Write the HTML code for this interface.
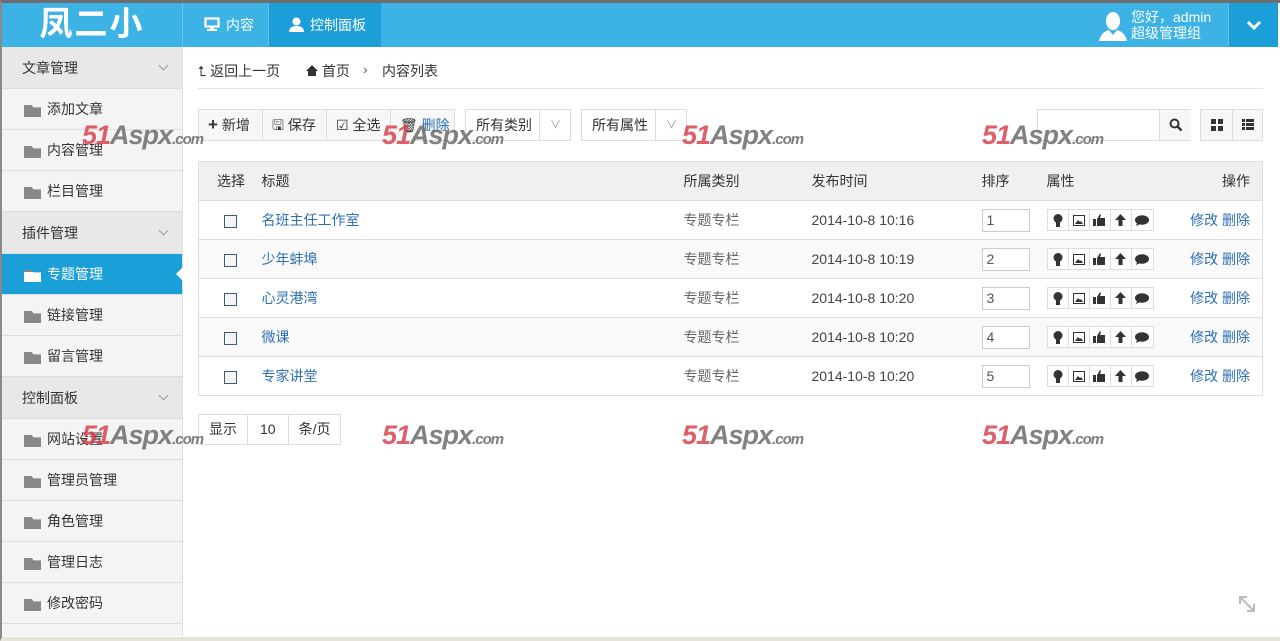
<!DOCTYPE html>
<html><head><meta charset="utf-8">
<style>
*{box-sizing:border-box;margin:0;padding:0}
body{width:1280px;height:641px;overflow:hidden;background:#fff;font-family:"Liberation Sans","Noto Sans CJK SC",sans-serif;font-size:14px;color:#333;position:relative}
.frame{position:absolute;left:0;top:0;width:1280px;height:641px;border-top:3px solid #6d6d6d;border-left:2px solid #8a8a8a;border-bottom:4px solid #e6e4d8}
.hdr{position:absolute;left:2px;top:3px;width:1276px;height:44px;background:#3db3e5}
.logo{position:absolute;left:0;top:0;width:181px;height:44px;color:#fff;font-size:33px;font-weight:bold;text-align:center;line-height:42px;border-right:1px solid #6cc6ec;letter-spacing:2px}
.nav{position:absolute;top:0;height:44px;color:#fff;line-height:44px;font-size:14px}
.n1{left:182px;width:85px;border-right:1px solid #5fc0ea;padding-left:20px}
.n2{left:267px;width:112px;background:#1c9fd8;padding-left:20px}
.user{position:absolute;left:1096px;top:6px;color:#fff;font-size:14px;line-height:16px}
.dd{position:absolute;right:0;top:0;width:50px;height:44px;background:#1c9fd8;border-left:1px solid #5fc0ea}
.side{position:absolute;left:2px;top:47px;width:181px;height:589px;background:#f4f4f4;border-right:1px solid #ddd}
.side div{height:41px;line-height:41px;border-bottom:1px solid #ddd;font-size:14px;position:relative}
.side .g{background:#e8e8e8;padding-left:20px;height:42px;line-height:42px}
.side .g:after{content:"";position:absolute;right:15px;top:15px;width:6px;height:6px;border-right:1px solid #999;border-bottom:1px solid #999;transform:rotate(45deg)}
.side .i{padding-left:45px}
.side .i:before{content:"";position:absolute;left:22px;top:16px;width:17px;height:10px;background:#888;border-top:2px solid #888;clip-path:polygon(0 0,45% 0,55% 20%,100% 20%,100% 100%,0 100%)}
.side .a{background:#1a9fd9;color:#fff}
.side .a:before{background:#fff}
.side .a:after{content:"";position:absolute;right:-1px;top:13px;border:7px solid transparent;border-right-color:#fff}
.bc{position:absolute;left:198px;top:61px;width:1065px;height:28px;border-bottom:1px solid #e2e2e2;font-size:14px}
.bc span{position:absolute;top:0}
.btn{position:absolute;top:109px;height:32px;border:1px solid #ddd;background:#f7f7f7;line-height:30px;font-size:14px}
table{position:absolute;left:198px;top:161px;width:1065px;border-collapse:collapse;border:1px solid #ddd;font-size:14px}
th{background:#f0f0f0;height:39px;font-weight:normal;text-align:left;border-bottom:1px solid #ddd}
td{height:39px;border-bottom:1px solid #ddd}
tr.e td{background:#f9f9f9}
.cb{display:inline-block;width:13px;height:13px;border:1px solid #3d5a7a;background:#f4f4f4;margin-left:25px;vertical-align:middle}
a{color:#2d6fb3;text-decoration:none}
.gy{color:#666}
.dt{color:#444}
.num{display:inline-block;width:48px;height:23px;border:1px solid #ccc;padding-left:4px;line-height:21px;color:#555;background:#fff}
.ic{display:inline-flex;border:1px solid #ddd;height:22px;background:#fff}
.ic i{width:21px;border-right:1px solid #ddd;display:flex;align-items:center;justify-content:center}
.ic i:last-child{border-right:0}
.pg{position:absolute;left:198px;top:414px;height:31px;border:1px solid #ddd;display:flex;font-size:14px;line-height:29px}
.pg span{padding:0 10px;border-right:1px solid #ddd}
.wm{position:absolute;font-size:27px;font-weight:bold;font-style:italic;letter-spacing:-1px;opacity:.85}
.wm b{color:#d9424f}.wm em{color:#6c6c6c}.wm small{font-size:15px;color:#666;font-weight:bold}
</style></head><body>
<div class="frame"></div>
<div class="hdr">
 <div class="logo">凤二小</div>
 <div class="nav n1"><svg width="16" height="14" viewBox="0 0 16 14" style="vertical-align:-1px;margin-right:6px"><rect x="1.5" y="1.5" width="13" height="8" fill="none" stroke="#fff" stroke-width="2.2"/><rect x="6" y="10" width="4" height="2" fill="#fff"/><rect x="3" y="12" width="10" height="2" fill="#fff"/></svg>内容</div>
 <div class="nav n2"><svg width="15" height="15" viewBox="0 0 15 15" style="vertical-align:-2px;margin-right:6px"><circle cx="7.5" cy="4.5" r="4" fill="#fff"/><path d="M0 15 Q0 9 7.5 9 Q15 9 15 15Z" fill="#fff"/></svg>控制面板</div>
 <svg style="position:absolute;left:1096px;top:8px" width="30" height="30" viewBox="0 0 30 30"><ellipse cx="15" cy="10" rx="7" ry="9" fill="#fff"/><path d="M1 30 Q3 21 11 19 L15 24 L19 19 Q27 21 29 30Z" fill="#fff"/></svg>
 <div class="user" style="left:1129px">您好，admin<br>超级管理组</div>
 <div class="dd"><svg width="16" height="10" viewBox="0 0 16 10" style="position:absolute;left:17px;top:17px"><path d="M2 2 L8 8 L14 2" stroke="#fff" stroke-width="3" fill="none"/></svg></div>
</div>
<div class="side">
 <div class="g">文章管理</div><div class="i">添加文章</div><div class="i">内容管理</div><div class="i">栏目管理</div>
 <div class="g">插件管理</div><div class="i a">专题管理</div><div class="i">链接管理</div><div class="i">留言管理</div>
 <div class="g">控制面板</div><div class="i">网站设置</div><div class="i">管理员管理</div><div class="i">角色管理</div><div class="i">管理日志</div><div class="i">修改密码</div>
</div>
<div class="bc"><span style="left:0">⮤ 返回上一页</span><span style="left:108px"><svg width="12" height="11" viewBox="0 0 12 11"><path d="M6 0 L12 6 L10 6 L10 11 L2 11 L2 6 L0 6Z" fill="#333"/></svg> 首页</span><span style="left:165px;color:#666">›</span><span style="left:184px">内容列表</span></div>
<div class="btn" style="left:198px;width:65px;padding-left:9px"><b style="font-size:17px">+</b> 新增</div>
<div class="btn" style="left:262px;width:65px;padding-left:9px">🖫 保存</div>
<div class="btn" style="left:326px;width:65px;padding-left:9px">☑ 全选</div>
<div class="btn" style="left:390px;width:65px;padding-left:9px">🗑 <a>删除</a></div>
<div class="btn" style="left:465px;width:106px;background:#fff;padding-left:10px">所有类别<span style="position:absolute;left:73px;top:0;width:32px;height:30px;border-left:1px solid #ddd;text-align:center;color:#999;font-size:11px">∨</span></div>
<div class="btn" style="left:581px;width:106px;background:#fff;padding-left:10px">所有属性<span style="position:absolute;left:73px;top:0;width:32px;height:30px;border-left:1px solid #ddd;text-align:center;color:#999;font-size:11px">∨</span></div>
<div class="btn" style="left:1037px;width:154px;background:#fff"><span style="position:absolute;left:121px;top:0;width:32px;height:30px;border-left:1px solid #ddd;background:#f7f7f7"><svg width="14" height="14" viewBox="0 0 14 14" style="position:absolute;left:9px;top:8px"><circle cx="5.5" cy="5.5" r="4" stroke="#333" stroke-width="2" fill="none"/><path d="M8.5 8.5 L12.5 12.5" stroke="#333" stroke-width="2.5"/></svg></span></div>
<div class="btn" style="left:1200px;width:63px"><svg width="12" height="12" style="position:absolute;left:10px;top:9px"><rect x="0" y="0" width="5" height="5" fill="#333"/><rect x="7" y="0" width="5" height="5" fill="#333"/><rect x="0" y="7" width="5" height="5" fill="#333"/><rect x="7" y="7" width="5" height="5" fill="#333"/></svg><span style="position:absolute;left:31px;top:0;height:30px;border-left:1px solid #ddd"></span><svg width="12" height="11" style="position:absolute;left:41px;top:9px"><rect x="0" y="0" width="3" height="3" fill="#333"/><rect x="4" y="0" width="8" height="3" fill="#333"/><rect x="0" y="4" width="3" height="3" fill="#333"/><rect x="4" y="4" width="8" height="3" fill="#333"/><rect x="0" y="8" width="3" height="3" fill="#333"/><rect x="4" y="8" width="8" height="3" fill="#333"/></svg></div>
<table>
<tr><th style="width:63px;padding-left:18px">选择</th><th style="width:422px">标题</th><th style="width:128px">所属类别</th><th style="width:170px">发布时间</th><th style="width:65px">排序</th><th>属性</th><th style="text-align:right;padding-right:12px">操作</th></tr>
<tr><td><span class="cb"></span></td><td><a>名班主任工作室</a></td><td class="gy">专题专栏</td><td class="dt">2014-10-8 10:16</td><td><span class="num">1</span></td><td>ICONS</td><td style="text-align:right;padding-right:12px"><a>修改 删除</a></td></tr>
<tr class="e"><td><span class="cb"></span></td><td><a>少年蚌埠</a></td><td class="gy">专题专栏</td><td class="dt">2014-10-8 10:19</td><td><span class="num">2</span></td><td>ICONS</td><td style="text-align:right;padding-right:12px"><a>修改 删除</a></td></tr>
<tr><td><span class="cb"></span></td><td><a>心灵港湾</a></td><td class="gy">专题专栏</td><td class="dt">2014-10-8 10:20</td><td><span class="num">3</span></td><td>ICONS</td><td style="text-align:right;padding-right:12px"><a>修改 删除</a></td></tr>
<tr class="e"><td><span class="cb"></span></td><td><a>微课</a></td><td class="gy">专题专栏</td><td class="dt">2014-10-8 10:20</td><td><span class="num">4</span></td><td>ICONS</td><td style="text-align:right;padding-right:12px"><a>修改 删除</a></td></tr>
<tr><td><span class="cb"></span></td><td><a>专家讲堂</a></td><td class="gy">专题专栏</td><td class="dt">2014-10-8 10:20</td><td><span class="num">5</span></td><td>ICONS</td><td style="text-align:right;padding-right:12px"><a>修改 删除</a></td></tr>
</table>
<div class="pg"><span>显示</span><span style="padding:0 12px">10</span><span style="border:0">条/页</span></div>
<svg width="20" height="20" viewBox="0 0 20 20" style="position:absolute;left:1237px;top:594px"><path d="M3 10 L3 3 L10 3 M3 3 L17 17 M17 10 L17 17 L10 17" stroke="#bbb" stroke-width="2" fill="none"/></svg>
<div class="wm" style="left:82px;top:120px"><b>51</b><em>Aspx</em><small>.com</small></div>
<div class="wm" style="left:382px;top:120px"><b>51</b><em>Aspx</em><small>.com</small></div>
<div class="wm" style="left:682px;top:120px"><b>51</b><em>Aspx</em><small>.com</small></div>
<div class="wm" style="left:982px;top:120px"><b>51</b><em>Aspx</em><small>.com</small></div>
<div class="wm" style="left:82px;top:420px"><b>51</b><em>Aspx</em><small>.com</small></div>
<div class="wm" style="left:382px;top:420px"><b>51</b><em>Aspx</em><small>.com</small></div>
<div class="wm" style="left:682px;top:420px"><b>51</b><em>Aspx</em><small>.com</small></div>
<div class="wm" style="left:982px;top:420px"><b>51</b><em>Aspx</em><small>.com</small></div>
<script>
var ic='<span class="ic"><i><svg width="10" height="13" viewBox="0 0 10 13"><circle cx="5" cy="4.5" r="4.5" fill="#333"/><rect x="3" y="8" width="4" height="5" fill="#333"/></svg></i><i><svg width="12" height="11" viewBox="0 0 12 11"><rect x=".5" y=".5" width="11" height="10" fill="none" stroke="#333"/><path d="M2 9 L5 5 L7 7 L8 6 L10 9Z" fill="#333"/></svg></i><i><svg width="13" height="12" viewBox="0 0 13 12"><path d="M0 5 H3 V12 H0Z M4 5 L7 0 L8 1 L7 4 H12 L12 12 H4Z" fill="#333"/></svg></i><i><svg width="11" height="12" viewBox="0 0 11 12"><path d="M5.5 0 L11 6 H7.5 V12 H3.5 V6 H0Z" fill="#333"/></svg></i><i><svg width="14" height="11" viewBox="0 0 14 11"><ellipse cx="7" cy="5" rx="7" ry="4.8" fill="#333"/><path d="M2 8 L1 11 L5 9Z" fill="#333"/></svg></i></span>';
document.querySelectorAll('td').forEach(function(t){if(t.textContent=='ICONS')t.innerHTML=ic;});
</script>
</body></html>
